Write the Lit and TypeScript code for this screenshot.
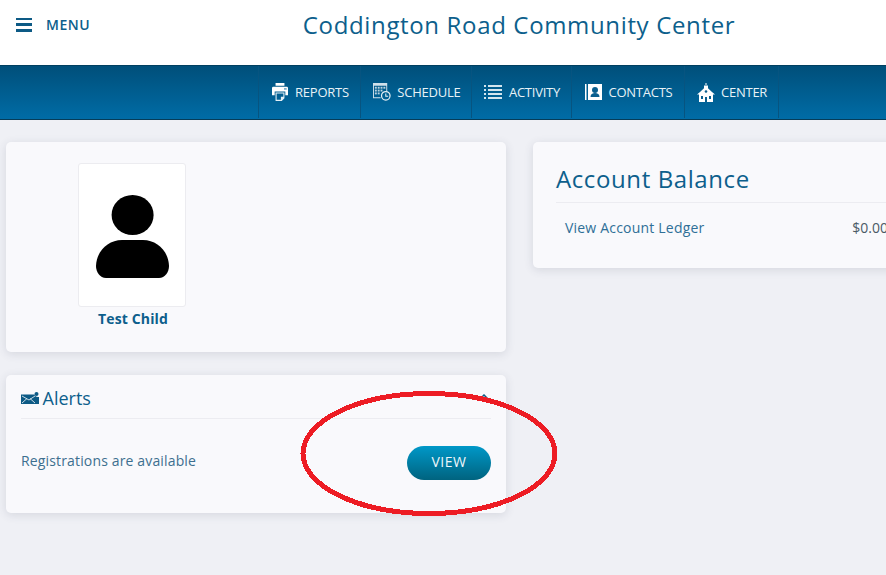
import { LitElement, html, css, svg } from "lit";
import { customElement } from "lit/decorators.js";

const icons: Record<string, unknown> = {
  reports: svg`<svg width="16" height="18" viewBox="0 0 18 19" preserveAspectRatio="none"><path fill="#fff" d="M4 0h10v3H4zM1.500 4h15A1.500 1.500 0 0 1 18 5.500V13h-3V9H3v4H0V5.500A1.500 1.500 0 0 1 1.500 4z"/><path fill="#e4f0f6" d="M4 10h10v6l-3 3H4zM5.200 11.200v6.600h4.800v-3.300h2.800v-3.300z"/><rect x="13.500" y="5.500" width="3" height="1.500" fill="#5d9cc0"/></svg>`,
  schedule: svg`<svg width="18" height="18" viewBox="0 0 19 19"><path fill="#cfe0ea" d="M0 0h15v9h-1V3H1v12h7v1H0z"/><g fill="#bcd3e0"><rect x="2" y="4" width="2" height="2"/><rect x="5" y="4" width="2" height="2"/><rect x="8" y="4" width="2" height="2"/><rect x="11" y="4" width="2" height="2"/><rect x="2" y="7" width="2" height="2"/><rect x="5" y="7" width="2" height="2"/><rect x="8" y="7" width="2" height="2"/><rect x="2" y="10" width="2" height="2"/><rect x="5" y="10" width="2" height="2"/></g><circle cx="13.500" cy="13.500" r="4.500" fill="none" stroke="#e6f0f5" stroke-width="1.300"/><path d="M13.500 11v3h2.500" fill="none" stroke="#e6f0f5" stroke-width="1.100"/></svg>`,
  activity: svg`<svg width="18" height="16" viewBox="0 0 18 16"><g fill="#d3e5ee"><rect x="0" y="1" width="2" height="2"/><rect x="4" y="1" width="14" height="2"/><rect x="0" y="5" width="2" height="2"/><rect x="4" y="5" width="14" height="2"/><rect x="0" y="9" width="2" height="2"/><rect x="4" y="9" width="14" height="2"/><rect x="0" y="13" width="2" height="2"/><rect x="4" y="13" width="14" height="2"/></g></svg>`,
  contacts: svg`<svg width="17" height="16" viewBox="0 0 17 16"><path fill="#fff" d="M0 0h1.500v16H0zM3 0h14v16H3z"/><circle cx="10" cy="6" r="3" fill="#0a5f8f"/><path fill="#0a5f8f" d="M5.500 13c0-3 2-4 4.500-4s4.500 1 4.500 4z"/></svg>`,
  center: svg`<svg width="18" height="19" viewBox="0 0 18 19"><path fill="#fff" d="M8.500 0h1v2h-1zM7 2.500h4v2.700L15 9l3 2.500H16V19H2v-7.500H0L3 9l4-3.800z"/><circle cx="9" cy="8.500" r="1.300" fill="#0a5f8f"/><rect x="8" y="14" width="2" height="5" fill="#0a5f8f"/><rect x="4" y="13" width="2" height="3" fill="#0a5f8f"/><rect x="12" y="13" width="2" height="3" fill="#0a5f8f"/></svg>`,
};

const navItems = [
  ["reports", "REPORTS"],
  ["schedule", "SCHEDULE"],
  ["activity", "ACTIVITY"],
  ["contacts", "CONTACTS"],
  ["center", "CENTER"],
];

@customElement("app-root")
export class AppRoot extends LitElement {
  static styles = css`
    :host {
      display: block;
      position: relative;
      width: 886px;
      height: 575px;
      overflow: hidden;
      background: #eff0f5;
      font-family: "Open Sans", sans-serif;
      color: #0d5f8c;
    }
    .top {
      height: 65px;
      background: #fff;
      position: relative;
    }
    .menu {
      position: absolute;
      left: 16px;
      top: 17px;
      display: flex;
      align-items: center;
      gap: 14px;
      font-size: 14px;
      font-weight: 600;
      letter-spacing: 0.5px;
      line-height: 15px;
      color: #0d5f8c;
    }
    .burger {
      width: 16px;
      height: 14px;
      display: flex;
      flex-direction: column;
      justify-content: space-between;
    }
    .burger i {
      display: block;
      height: 2.500px;
      background: #0d5a85;
    }
    .title {
      margin: 0;
      padding: 7px 0 0 152px;
      text-align: center;
      font-size: 24px;
      font-weight: 400;
      line-height: 36px;
      letter-spacing: 0.65px;
      color: #0d5f8c;
    }
    nav {
      height: 52px;
      padding: 0 0 1px 150.750px;
      background: linear-gradient(#004f7a, #006ca6);
      border-top: 1px solid #003f60;
      border-bottom: 1px solid #063c58;
      display: flex;
      justify-content: center;
      box-shadow: 0 -1px 1px #d5d8de;
    }
    .nav-item {
      display: flex;
      align-items: center;
      gap: 6.500px;
      padding: 0 11.050px 0 12px;
      border-right: 1px solid #075480;
      color: #e8f2f7;
      font-size: 13px;
      letter-spacing: -0.25px;
    }
    .nav-item:first-child {
      border-left: 1px solid #075480;
    }
    .ic {
      flex: none;
      width: 18px;
      display: flex;
      justify-content: center;
    }
    main {
      display: grid;
      grid-template-columns: 500px 400px;
      column-gap: 27px;
      padding: 22px 0 0 6px;
      align-items: start;
    }
    .col {
      display: flex;
      flex-direction: column;
      gap: 23px;
    }
    .card {
      background: #f9f9fc;
      border-radius: 5px;
      box-shadow: 0 2px 10px rgba(60, 65, 90, 0.14);
    }
    .profile {
      height: 210px;
      box-sizing: border-box;
      padding: 21px 0 0 72px;
    }
    .person {
      width: 108px;
      display: flex;
      flex-direction: column;
      align-items: center;
    }
    .photo {
      width: 108px;
      height: 144px;
      box-sizing: border-box;
      background: #fff;
      border: 1px solid #ececf0;
      border-radius: 3px;
      display: flex;
      align-items: center;
      justify-content: center;
      padding-top: 4px;
    }
    .name {
      font-size: 14px;
      font-weight: 700;
      letter-spacing: 0.15px;
      line-height: 24px;
      color: #0d5f8c;
      padding-left: 2px;
    }
    .alerts {
      height: 138px;
      box-sizing: border-box;
      padding: 0 15px;
    }
    .alerts-head {
      height: 44px;
      box-sizing: border-box;
      border-bottom: 1px solid #ececf1;
      display: flex;
      align-items: center;
      gap: 3.500px;
      font-size: 18px;
      color: #0d5f8c;
      padding-top: 3px;
    }
    .chev { margin-left: auto; margin-right: 2px; margin-top: -3px; }
    .alerts-body {
      display: flex;
      align-items: center;
      justify-content: space-between;
      padding-top: 27px;
      font-size: 14px;
      color: #3d6f8f;
      letter-spacing: 0.15px;
    }
    .alerts-body span { margin-top: -5px; }
    .view {
      width: 84px;
      height: 34px;
      border: 0;
      border-radius: 17px;
      background: linear-gradient(#0098c8, #00637f);
      color: #eef7fb;
      font: 400 14px "Open Sans", sans-serif;
      letter-spacing: 0.5px;
      padding: 0 0 3px;
    }
    .balance {
      height: 126px;
      box-sizing: border-box;
      padding: 0 23px;
    }
    .balance h2 {
      margin: 0;
      height: 61px;
      box-sizing: border-box;
      padding-top: 19px;
      font-size: 24px;
      font-weight: 400;
      line-height: 36px;
      color: #0d5f8c;
      letter-spacing: 0.6px;
      border-bottom: 1px solid #ececf1;
    }
    .ledger {
      display: flex;
      justify-content: space-between;
      padding: 13px 10px 0 9px;
      font-size: 14px;
      line-height: 24px;
      width: 342px;
      box-sizing: border-box;
    }
    .ledger a { color: #2f6f97; letter-spacing: 0.2px; }
    .ledger b { font-weight: 400; color: #4b5a66; }
    .ring {
      position: absolute;
      left: 298px;
      top: 388px;
      pointer-events: none;
    }
  `;

  render() {
    return html`
      <header class="top">
        <div class="menu">
          <div class="burger"><i></i><i></i><i></i></div>
          <span>MENU</span>
        </div>
        <h1 class="title">Coddington Road Community Center</h1>
      </header>
      <nav>
        ${navItems.map(
          ([k, label]) =>
            html`<div class="nav-item"><span class="ic">${icons[k]}</span><span>${label}</span></div>`
        )}
      </nav>
      <main>
        <div class="col">
          <section class="card profile">
            <div class="person">
              <div class="photo">
                <svg width="73" height="84" viewBox="0 0 73 84">
                  <ellipse cx="36.600" cy="20" rx="21" ry="20" fill="#000" />
                  <path
                    fill="#000"
                    d="M26 45h21c14 0 25.500 11 26 26 0 6-4 12-10 12H10c-6 0-10-6-10-12C.5 56 12 45 26 45z"
                  />
                </svg>
              </div>
              <div class="name">Test Child</div>
            </div>
          </section>
          <section class="card alerts">
            <div class="alerts-head">
              <svg width="18" height="12" viewBox="0 0 18 12">
                <path fill="#0d5a85" d="M0 2.500h13.500A4 4 0 0 0 18 5v7H0z" />
                <circle cx="15.500" cy="2" r="2" fill="#0d5a85" />
                <path
                  d="M1 4l7 4 6-4M1 11l5-4.500M14 11l-5-4.500"
                  fill="none"
                  stroke="#dfe9ef"
                  stroke-width="0.900"
                />
              </svg>
              <span>Alerts</span>
              <svg class="chev" width="10" height="6" viewBox="0 0 10 6">
                <path d="M1 5l4-4 4 4" fill="none" stroke="#0d5a85" stroke-width="1.500" />
              </svg>
            </div>
            <div class="alerts-body">
              <span>Registrations are available</span>
              <button class="view">VIEW</button>
            </div>
          </section>
        </div>
        <section class="card balance">
          <h2>Account Balance</h2>
          <div class="ledger">
            <a>View Account Ledger</a>
            <b>$0.00</b>
          </div>
        </section>
      </main>
      <svg class="ring" width="262" height="132" viewBox="0 0 262 132" shape-rendering="crispEdges">
        <ellipse cx="131" cy="65.500" rx="126" ry="60" fill="none" stroke="#ed1c24" stroke-width="5" />
      </svg>
    `;
  }
}
